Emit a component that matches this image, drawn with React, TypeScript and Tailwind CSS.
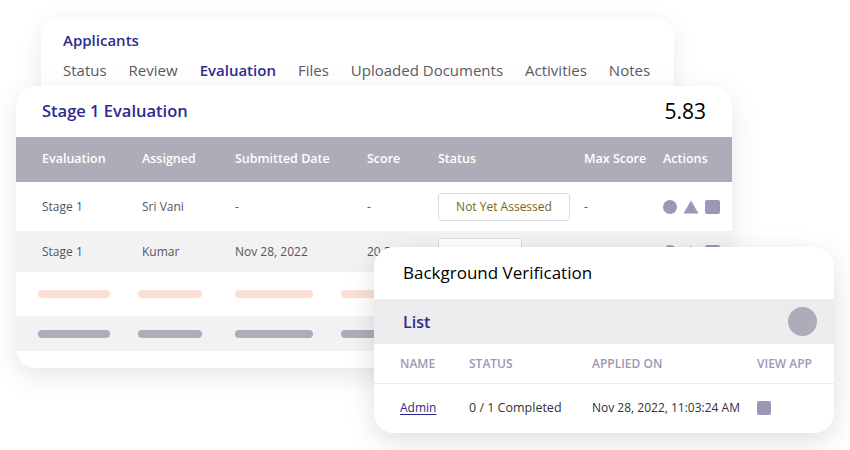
import React from "react";

const F = { fontFamily: '"Open Sans", "Liberation Sans", sans-serif' };

function Icons() {
  return (
    <div className="flex items-center gap-[6px]">
      <span className="block w-[14px] h-[14px] rounded-full bg-[#9a98b6]" />
      <svg width="16" height="14" viewBox="0 0 16 14">
        <path d="M8 0.5 L15.5 13.5 L0.5 13.5 Z" fill="#9a98b6" />
      </svg>
      <span className="block w-[15px] h-[14px] rounded-[2px] bg-[#9a98b6]" />
    </div>
  );
}

export default function App() {
  const cols = "grid grid-cols-[100px_93px_132px_71px_146px_79px_1fr] items-center pl-[26px]";
  return (
    <div className="relative w-[850px] h-[450px] bg-white overflow-hidden" style={F}>
      {/* Applicants card */}
      <div className="absolute left-[41px] top-[17px] w-[633px] h-[120px] bg-white rounded-[20px] shadow-[0_6px_24px_rgba(0,0,0,0.09)] px-[22px] pt-[13px]">
        <div className="text-[15px] font-semibold text-[#2e2b8e] leading-[20px]">Applicants</div>
        <div className="flex gap-[22px] mt-[10px] text-[15px] text-[#5a5a66] leading-[20px] whitespace-nowrap">
          <span>Status</span>
          <span>Review</span>
          <span className="text-[#2e2b8e] font-semibold">Evaluation</span>
          <span>Files</span>
          <span>Uploaded Documents</span>
          <span>Activities</span>
          <span>Notes</span>
        </div>
      </div>

      {/* Stage 1 Evaluation card */}
      <div className="absolute left-[16px] top-[86px] w-[716px] h-[282px] bg-white rounded-[20px] shadow-[0_8px_28px_rgba(0,0,0,0.10)] overflow-hidden flex flex-col">
        <div className="h-[51px] flex items-center justify-between px-[26px]">
          <span className="text-[16.5px] font-semibold text-[#2e2b8e]">Stage 1 Evaluation</span>
          <span className="text-[21px] font-medium text-black">5.83</span>
        </div>
        <div className={cols + " h-[45px] bg-[#adacb8] text-white text-[12.5px] font-semibold"}>
          <span>Evaluation</span>
          <span>Assigned</span>
          <span>Submitted Date</span>
          <span>Score</span>
          <span>Status</span>
          <span>Max Score</span>
          <span>Actions</span>
        </div>
        <div className={cols + " h-[49px] bg-white text-[12px] text-[#55555f]"}>
          <span>Stage 1</span>
          <span>Sri Vani</span>
          <span>-</span>
          <span>-</span>
          <span className="w-[132px] h-[28px] border border-[#dcdce0] rounded-[3px] flex items-center justify-center text-[#7a6512]">
            Not Yet Assessed
          </span>
          <span>-</span>
          <Icons />
        </div>
        <div className={cols + " h-[41px] bg-[#f2f2f3] text-[12px] text-[#55555f]"}>
          <span>Stage 1</span>
          <span>Kumar</span>
          <span>Nov 28, 2022</span>
          <span>20.50</span>
          <span className="w-[84px] h-[28px] border border-[#dcdce0] bg-white rounded-[3px]" />
          <span>50.00</span>
          <Icons />
        </div>
        <div className="h-[44px] bg-white flex items-center gap-[28px] pl-[22px]">
          <span className="h-[8px] w-[72px] rounded-full bg-[#fbdfd6]" />
          <span className="h-[8px] w-[64px] rounded-full bg-[#fbdfd6]" />
          <span className="h-[8px] w-[78px] ml-[5px] rounded-full bg-[#fbdfd6]" />
          <span className="h-[8px] w-[72px] rounded-full bg-[#fbdfd6]" />
        </div>
        <div className="h-[35px] bg-[#f2f2f3] flex items-center gap-[28px] pl-[22px]">
          <span className="h-[8px] w-[72px] rounded-full bg-[#adacb8]" />
          <span className="h-[8px] w-[64px] rounded-full bg-[#adacb8]" />
          <span className="h-[8px] w-[78px] ml-[5px] rounded-full bg-[#adacb8]" />
          <span className="h-[8px] w-[72px] rounded-full bg-[#adacb8]" />
        </div>
      </div>

      {/* Background Verification card */}
      <div className="absolute left-[374px] top-[247px] w-[460px] h-[186px] bg-white rounded-[20px] shadow-[0_8px_28px_rgba(0,0,0,0.13)] overflow-hidden flex flex-col">
        <div className="h-[52px] flex items-center px-[29px] text-[17px] font-medium text-black">
          Background Verification
        </div>
        <div className="h-[45px] bg-[#ececef] flex items-center justify-between pl-[29px] pr-[17px]">
          <span className="text-[16px] font-semibold text-[#2e2b8e]">List</span>
          <span className="block w-[29px] h-[29px] rounded-full bg-[#adacb8]" />
        </div>
        <div className="grid grid-cols-[69px_123px_165px_1fr] items-center pl-[26px] h-[40px] border-b border-[#ececef] text-[12px] font-semibold text-[#9a98b4] uppercase">
          <span>Name</span>
          <span>Status</span>
          <span>Applied On</span>
          <span>View App</span>
        </div>
        <div className="grid grid-cols-[69px_123px_165px_1fr] items-center pl-[26px] h-[48px] text-[12px] text-[#333338]">
          <span className="text-[#2e2b8e] underline underline-offset-2">Admin</span>
          <span className="text-[12.5px]">0 / 1 Completed</span>
          <span>Nov 28, 2022, 11:03:24 AM</span>
          <span className="block w-[14px] h-[14px] rounded-[2px] bg-[#9a98b6]" />
        </div>
      </div>
    </div>
  );
}
